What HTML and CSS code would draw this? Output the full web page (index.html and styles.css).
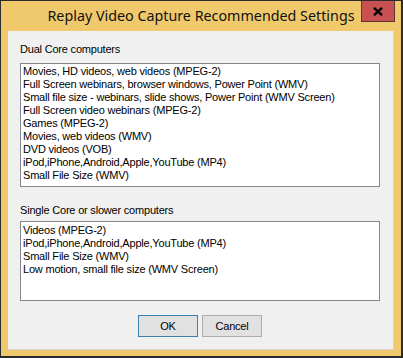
FILE: index.html
```html
<!DOCTYPE html>
<html>
<head>
<meta charset="utf-8">
<link rel="stylesheet" href="styles.css">
</head>
<body>
<div class="window">
  <div class="titlebar">
    <span class="spacer"></span>
    <span class="title">Replay Video Capture Recommended Settings</span>
    <div class="close-cell">
      <div class="close">
        <svg width="10" height="9" viewBox="0 0 10 9"><path d="M1 0.8 L9 8.2 M9 0.8 L1 8.2" stroke="#000" stroke-width="2.3" fill="none"/></svg>
      </div>
    </div>
  </div>
  <div class="client">
    <div class="label label-dual">Dual Core computers</div>
    <ul class="listbox listbox-dual">
      <li>Movies, HD videos, web videos (MPEG-2)</li>
      <li>Full Screen webinars, browser windows, Power Point (WMV)</li>
      <li>Small file size - webinars, slide shows, Power Point (WMV Screen)</li>
      <li>Full Screen video webinars (MPEG-2)</li>
      <li>Games (MPEG-2)</li>
      <li>Movies, web videos (WMV)</li>
      <li>DVD videos (VOB)</li>
      <li>iPod,iPhone,Android,Apple,YouTube (MP4)</li>
      <li>Small File Size (WMV)</li>
    </ul>
    <div class="label label-single">Single Core or slower computers</div>
    <ul class="listbox listbox-single">
      <li>Videos (MPEG-2)</li>
      <li>iPod,iPhone,Android,Apple,YouTube (MP4)</li>
      <li>Small File Size (WMV)</li>
      <li>Low motion, small file size (WMV Screen)</li>
    </ul>
    <div class="buttons">
      <button class="btn btn-default">OK</button>
      <button class="btn">Cancel</button>
    </div>
  </div>
</div>
</body>
</html>
```
FILE: styles.css
```css
html, body {
  margin: 0;
  padding: 0;
  background: #f0c96c;
}
body {
  width: 403px;
  height: 358px;
  overflow: hidden;
}
.window {
  box-sizing: border-box;
  width: 403px;
  height: 358px;
  background: #f0c96c;
  border: 1px solid #2b2b2b;
  border-right-width: 2px;
  border-bottom-width: 2px;
  padding: 0 7px 6px 7px;
  display: flex;
  flex-direction: column;
  font-family: "Liberation Sans", Arial, sans-serif;
  font-size: 11px;
  letter-spacing: -0.2px;
  color: #000;
}
.titlebar {
  height: 30px;
  margin: 0 -7px;
  display: grid;
  grid-template-columns: 1fr auto 1fr;
  flex: none;
}
.title {
  font-family: "Noto Sans", "Open Sans", sans-serif;
  font-size: 14.3px;
  letter-spacing: 0;
  line-height: 30px;
  color: #111;
  white-space: nowrap;
}
.close-cell {
  display: flex;
  justify-content: flex-end;
  align-items: flex-start;
}
.close {
  box-sizing: border-box;
  width: 34px;
  height: 21px;
  margin-right: 6px;
  background: #c75050;
  border: 1px solid #5b3434;
  border-top: 0;
  display: flex;
  align-items: center;
  justify-content: center;
}
.close svg {
  display: block;
}
.client {
  flex: 1;
  box-sizing: border-box;
  background: #f0f0f0;
  border-right: 1px solid #d4d4d4;
  border-bottom: 1px solid #d4d4d4;
  padding: 12px 13px 0 12px;
  display: flex;
  flex-direction: column;
}
.label {
  line-height: 13px;
  height: 13px;
  white-space: nowrap;
}
.listbox {
  box-sizing: border-box;
  list-style: none;
  margin: 0;
  width: 360px;
  background: #fff;
  border: 1px solid #828790;
  padding: 1px 2px;
  line-height: 13px;
  overflow: hidden;
}
.listbox li {
  height: 13px;
  white-space: nowrap;
}
.listbox-dual {
  margin-top: 7px;
  height: 124px;
}
.label-single {
  margin-top: 17px;
}
.listbox-single {
  margin-top: 4px;
  height: 80px;
  padding-top: 2px;
}
.buttons {
  margin-top: 14px;
  display: flex;
  justify-content: center;
  gap: 4px;
}
.btn {
  box-sizing: border-box;
  width: 60px;
  height: 22px;
  padding: 0;
  margin: 0;
  background: #e1e1e1;
  border: 1px solid #adadad;
  font-family: "Liberation Sans", Arial, sans-serif;
  font-size: 11px;
  letter-spacing: -0.2px;
  color: #000;
}
.btn-default {
  border-color: #3c7fb1;
}
```
